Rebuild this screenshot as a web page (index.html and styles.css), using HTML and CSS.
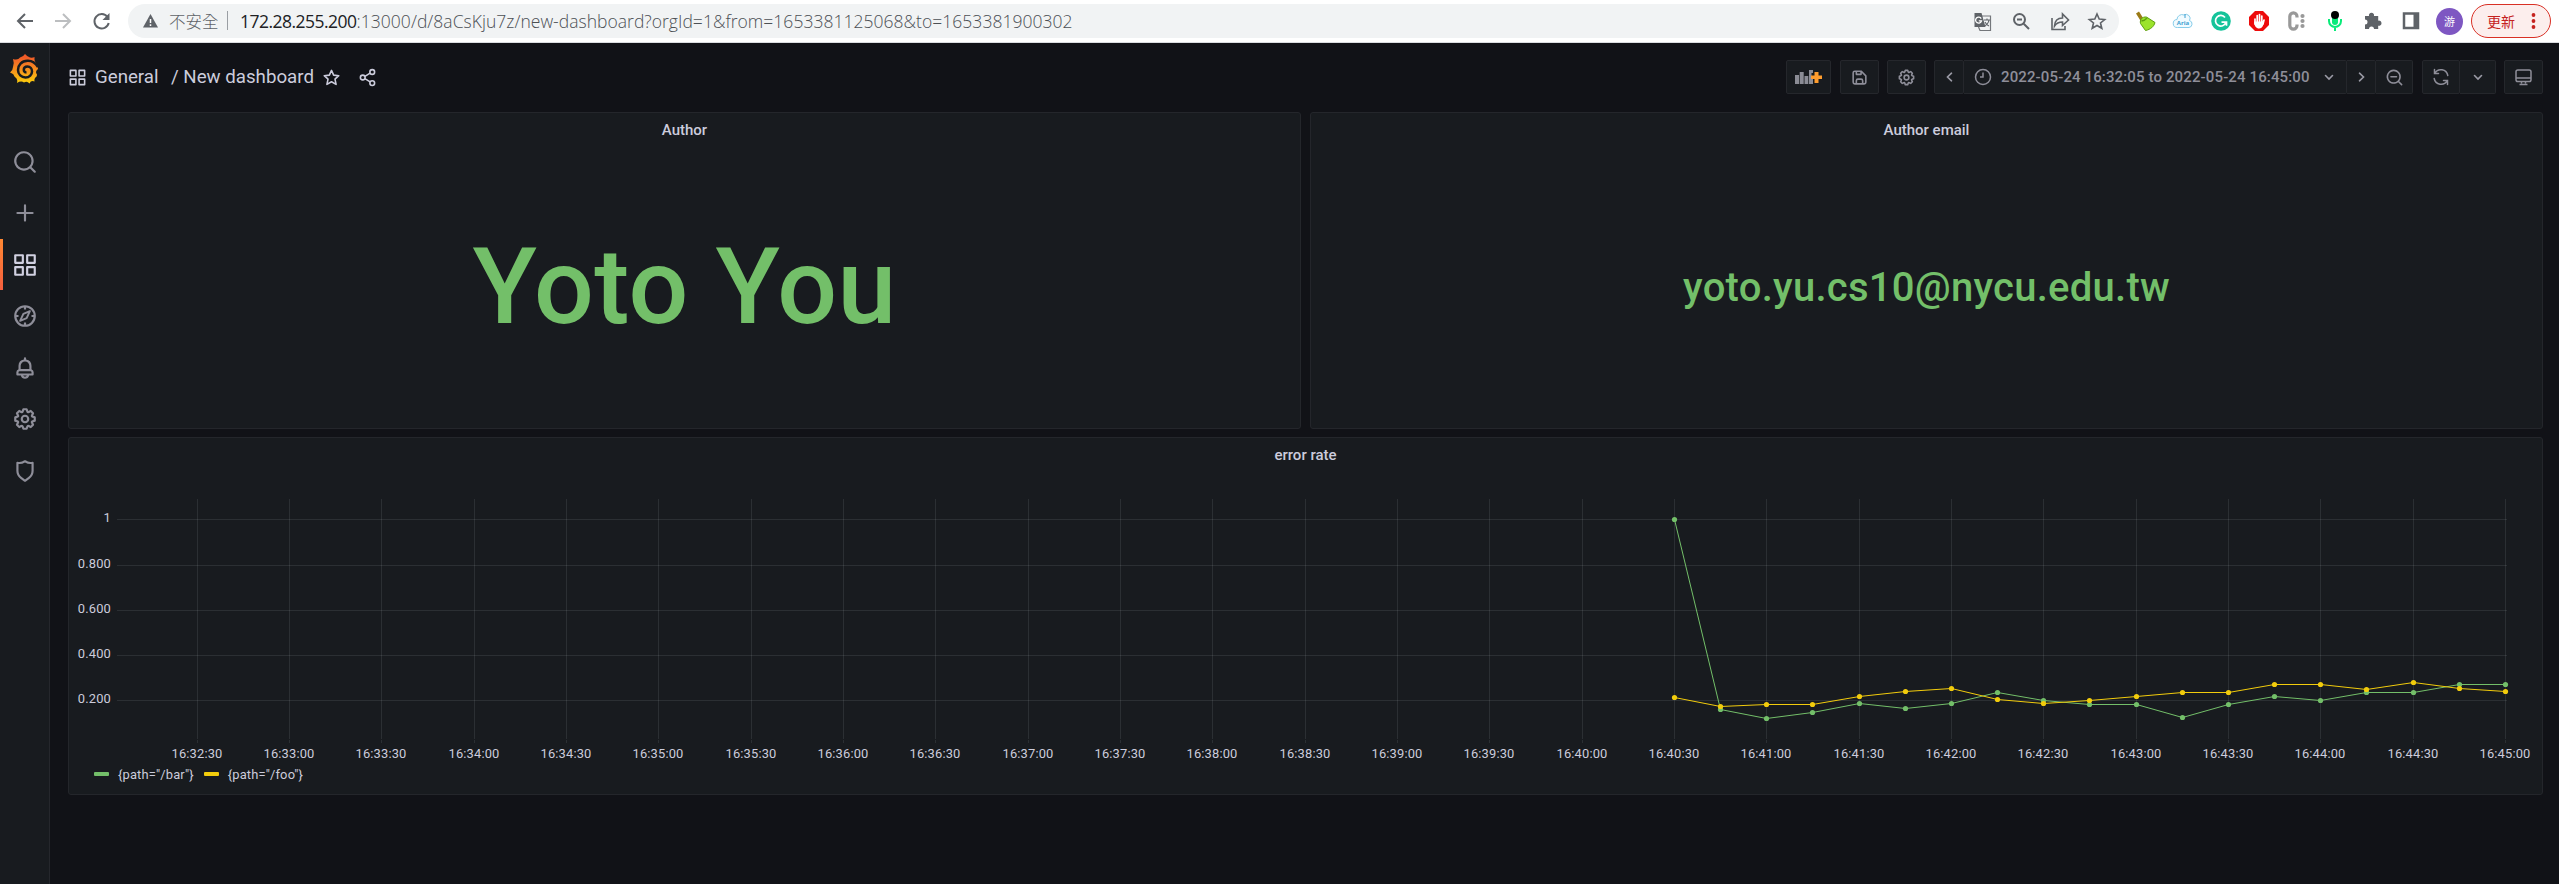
FILE: index.html
```
<!DOCTYPE html>
<html lang="zh-Hant">
<head>
<meta charset="utf-8">
<title>New dashboard - Grafana</title>
<link rel="stylesheet" href="styles.css">
</head>
<body>
<svg class="defs" width="0" height="0" aria-hidden="true">
  <symbol id="apps" viewBox="0 0 24 24"><path d="M10,13H3a1,1,0,0,0-1,1v7a1,1,0,0,0,1,1h7a1,1,0,0,0,1-1V14A1,1,0,0,0,10,13ZM9,20H4V15H9ZM21,2H14a1,1,0,0,0-1,1v7a1,1,0,0,0,1,1h7a1,1,0,0,0,1-1V3A1,1,0,0,0,21,2ZM20,9H15V4h5Zm1,4H14a1,1,0,0,0-1,1v7a1,1,0,0,0,1,1h7a1,1,0,0,0,1-1V14A1,1,0,0,0,21,13Zm-1,7H15V15h5ZM10,2H3A1,1,0,0,0,2,3v7a1,1,0,0,0,1,1h7a1,1,0,0,0,1-1V3A1,1,0,0,0,10,2ZM9,9H4V4H9Z"/></symbol>
  <symbol id="search" viewBox="0 0 24 24"><path d="M21.71,20.29,18,16.61A9,9,0,1,0,16.61,18l3.68,3.68a1,1,0,0,0,1.42,0A1,1,0,0,0,21.71,20.29ZM11,18a7,7,0,1,1,7-7A7,7,0,0,1,11,18Z"/></symbol>
  <symbol id="zoomout" viewBox="0 0 24 24"><path d="M21.71,20.29,18,16.61A9,9,0,1,0,16.61,18l3.68,3.68a1,1,0,0,0,1.42,0A1,1,0,0,0,21.71,20.29ZM11,18a7,7,0,1,1,7-7A7,7,0,0,1,11,18ZM7.500,10h7a1,1,0,0,1,0,2h-7a1,1,0,0,1,0-2Z"/></symbol>
  <symbol id="plus" viewBox="0 0 24 24"><path d="M19,11H13V5a1,1,0,0,0-2,0v6H5a1,1,0,0,0,0,2h6v6a1,1,0,0,0,2,0V13h6a1,1,0,0,0,0-2Z"/></symbol>
  <symbol id="bell" viewBox="0 0 24 24"><path d="M18,13.180V10a6,6,0,0,0-5-5.910V3a1,1,0,0,0-2,0V4.090A6,6,0,0,0,6,10v3.180A3,3,0,0,0,4,16v2a1,1,0,0,0,1,1H8.140a4,4,0,0,0,7.720,0H19a1,1,0,0,0,1-1V16A3,3,0,0,0,18,13.180ZM8,10a4,4,0,0,1,8,0v3H8Zm4,10a2,2,0,0,1-1.720-1h3.440A2,2,0,0,1,12,20Zm6-3H6V16a1,1,0,0,1,1-1H17a1,1,0,0,1,1,1Z"/></symbol>
  <symbol id="cog" viewBox="0 0 24 24"><path d="M21.32,9.55l-1.89-.63.89-1.78A1,1,0,0,0,20.13,6L18,3.87a1,1,0,0,0-1.15-.19l-1.78.89-.63-1.89A1,1,0,0,0,13.5,2h-3a1,1,0,0,0-.95.68L8.92,4.57,7.14,3.68A1,1,0,0,0,6,3.87L3.87,6a1,1,0,0,0-.19,1.15l.89,1.78-1.89.63A1,1,0,0,0,2,10.5v3a1,1,0,0,0,.68.95l1.89.63-.89,1.78A1,1,0,0,0,3.87,18L6,20.13a1,1,0,0,0,1.15.19l1.78-.89.63,1.89a1,1,0,0,0,.95.68h3a1,1,0,0,0,.95-.68l.63-1.89,1.78.89A1,1,0,0,0,18,20.13L20.13,18a1,1,0,0,0,.19-1.15l-.89-1.78,1.89-.63A1,1,0,0,0,22,13.5v-3A1,1,0,0,0,21.32,9.55ZM20,12.78l-1.2.4A2,2,0,0,0,17.64,16l.57,1.14-1.1,1.1L16,17.64a2,2,0,0,0-2.79,1.16l-.4,1.2H11.22l-.4-1.2A2,2,0,0,0,8,17.64l-1.14.57-1.1-1.1L6.36,16A2,2,0,0,0,5.2,13.18L4,12.78V11.22l1.2-.4A2,2,0,0,0,6.36,8L5.79,6.89l1.1-1.1L8,6.36A2,2,0,0,0,10.82,5.2l.4-1.2h1.56l.4,1.2A2,2,0,0,0,16,6.36l1.14-.57,1.1,1.1L17.64,8a2,2,0,0,0,1.16,2.79l1.2.4ZM12,8a4,4,0,1,0,4,4A4,4,0,0,0,12,8Zm0,6a2,2,0,1,1,2-2A2,2,0,0,1,12,14Z"/></symbol>
  <symbol id="shield" viewBox="0 0 24 24"><path d="M19.63,3.65a1,1,0,0,0-.84-.2,8,8,0,0,1-6.22-1.27,1,1,0,0,0-1.14,0A8,8,0,0,1,5.21,3.45a1,1,0,0,0-.84.2A1,1,0,0,0,4,4.43v7.45a9,9,0,0,0,3.77,7.33l3.65,2.6a1,1,0,0,0,1.16,0l3.65-2.6A9,9,0,0,0,20,11.88V4.43A1,1,0,0,0,19.63,3.65ZM18,11.88a7,7,0,0,1-2.93,5.7L12,19.77,8.93,17.58A7,7,0,0,1,6,11.88V5.58a10,10,0,0,0,6-1.39,10,10,0,0,0,6,1.39Z"/></symbol>
  <symbol id="save" viewBox="0 0 24 24"><path d="m20.710 9.290-6-6a1 1 0 0 0-.32-.21A1.090 1.090 0 0 0 14 3H6a3 3 0 0 0-3 3v12a3 3 0 0 0 3 3h12a3 3 0 0 0 3-3v-8a1 1 0 0 0-.29-.71ZM9 5h4v2H9Zm6 14H9v-3a1 1 0 0 1 1-1h4a1 1 0 0 1 1 1Zm4-1a1 1 0 0 1-1 1h-1v-3a3 3 0 0 0-3-3h-4a3 3 0 0 0-3 3v3H6a1 1 0 0 1-1-1V6a1 1 0 0 1 1-1h1v3a1 1 0 0 0 1 1h6a1 1 0 0 0 1-1V6.410l4 4Z"/></symbol>
  <linearGradient id="flame" x1="0" y1="1" x2="0" y2="0"><stop offset="0" stop-color="#fcd00b"/><stop offset=".5" stop-color="#f68b1f"/><stop offset=".9" stop-color="#f05a28"/></linearGradient>
</svg>

<header class="browser">
  <div class="nav">
    <svg width="38" height="24" viewBox="0 0 38 24" class="stroke-dark"><path d="M27 12H12M19 5l-7 7 7 7"/></svg>
    <svg width="38" height="24" viewBox="0 0 38 24" class="stroke-pale"><path d="M11 12h15M19 5l7 7-7 7"/></svg>
    <svg width="38" height="24" viewBox="0 0 38 24" class="stroke-dark"><path d="M25.500 8A7.200 7.200 0 1 0 26.700 14"/><path d="M27.500 4v7h-7z" class="solid-dark"/></svg>
  </div>
  <div class="omnibox">
    <svg class="warn" width="15" height="14" viewBox="0 0 15 14"><path d="M7.500 0 15 13.500H0z" fill="#5f6368"/><path d="M7.500 5v4M7.500 10.300v1.700" stroke="#fff" stroke-width="1.500"/></svg>
    <span class="insecure">不安全</span>
    <span class="bar"></span>
    <span class="url"><b>172.28.255.200</b>:13000/d/8aCsKju7z/new-dashboard?orgId=1&amp;from=1653381125068&amp;to=1653381900302</span>
    <div class="omni-icons">
      <svg width="38" height="24" viewBox="0 0 38 24"><path d="M17 7h9.500v14.500H16l-1.500-3.500" fill="#f1f3f4" stroke="#74777b" stroke-width="1.200"/><path d="M10.500 4h7l4 14h-11z" fill="#5f6368"/><path d="M17.200 9.600a3 3 0 1 0 .3 2.200h-2.700" fill="none" stroke="#fff" stroke-width="1.300"/><path d="M20 11h6M23 9.500V11M25 11c-.5 3-2.500 5-4.500 6M21 13c1 2 2.500 3.500 4 4" fill="none" stroke="#5f6368" stroke-width="1.100"/></svg>
      <svg width="38" height="24" viewBox="0 0 38 24" class="stroke-dark"><circle cx="17.500" cy="10.500" r="5.500"/><path d="M15 10.500h5M21.700 14.700l5.300 5.300"/></svg>
      <svg width="38" height="24" viewBox="0 0 38 24" class="stroke-dark thin"><path d="M12 9v11.500h13V17M14.500 17c.3-5.500 3-8 8-8V5l6 6-6 5.500V13c-3.500 0-6 1-8 4z"/></svg>
      <svg width="38" height="24" viewBox="0 0 38 24" class="stroke-dark thin"><path d="M19 5l2.200 5 5.500.5-4.200 3.500 1.300 5.300L19 16.500l-4.800 2.800 1.300-5.300-4.200-3.500 5.500-.5z"/></svg>
    </div>
  </div>
  <div class="extensions">
    <svg width="38" height="24" viewBox="0 0 38 24"><path d="M10 4.500l3-2 5 8-3 2z" fill="#9a7a16"/><path d="M15.500 9.500c2.500-2 5-2 6.500-.5l7 4.500c-1 4-4.500 7-9.500 8l-5-7c-.5-2 0-3.500 1-5z" fill="#9be32c" stroke="#5d9e0d"/><path d="M15.500 11.500c2 1 4-1 5.500-2.500" fill="none" stroke="#5d9e0d" stroke-width="1.500"/></svg>
    <svg width="38" height="24" viewBox="0 0 38 24"><path d="M13.500 18.500a4 4 0 0 1-.5-8 5 5 0 0 1 7-4.500 4 4 0 0 1 5.500 5.500 3.600 3.600 0 0 1-.5 7z" fill="#f1fbff" stroke="#88cdea"/><text x="19" y="16.300" class="cloud-text">Aria</text><path d="M21 5v4" stroke="#3c9ed0"/></svg>
    <svg width="38" height="24" viewBox="0 0 38 24"><circle cx="19" cy="12" r="9.800" fill="#15c39a"/><path d="M23 8.500a5.300 5.300 0 1 0 .8 5M19.500 13.200h5v3.500" fill="none" stroke="#fff" stroke-width="1.700"/></svg>
    <svg width="38" height="24" viewBox="0 0 38 24"><path d="M15 2h8l6 6v8l-6 6h-8l-6-6V8z" fill="#ed0b0b"/><path d="M15 10v5M17.200 6.500V14M19.500 5.500V14M21.800 7v8M24 11l-1 4" stroke="#fff" stroke-width="1.700" stroke-linecap="round"/><path d="M14.200 12.500h9.500c0 4-1.500 7-4.500 7s-5-2.500-5-7z" fill="#fff"/></svg>
    <svg width="38" height="24" viewBox="0 0 38 24" fill="none" stroke="#999"><path d="M19 8.500V7.500a3.600 3.600 0 0 0-7.200 0v9a3.600 3.600 0 0 0 7.200 0v-1" stroke-width="3.200"/><path d="M24.500 7v0M24.500 12v0M24.500 17v0" stroke-width="4.200" stroke-linecap="round"/></svg>
    <svg width="38" height="24" viewBox="0 0 38 24"><rect x="16" y="4" width="6" height="12" rx="3" fill="#09eb7a"/><path d="M13 10v2a6 6 0 0 0 12 0v-2M19 18v4" fill="none" stroke="#09eb7a" stroke-width="2"/><circle cx="19" cy="6" r="4" fill="#000"/></svg>
    <svg width="38" height="24" viewBox="0 0 38 24"><path d="M11 7h4a2.600 2.600 0 1 1 5 0h4.200v4.700a2.600 2.600 0 1 1 0 5V20H20a2.500 2.500 0 1 0-5 0h-4v-4.500a2.500 2.500 0 1 0 0-5z" fill="#5f6368"/></svg>
    <svg width="38" height="24" viewBox="0 0 38 24"><path d="M12 4.500h14v14.500H12z" fill="#fff" stroke="#5f6368" stroke-width="2.500"/><path d="M21.500 4h5v15h-5z" fill="#5f6368"/></svg>
  </div>
  <span class="avatar">游</span>
  <span class="update">更新<svg width="5" height="18" viewBox="0 0 5 18" fill="#c5221f"><circle cx="2.500" cy="3" r="1.900"/><circle cx="2.500" cy="9" r="1.900"/><circle cx="2.500" cy="15" r="1.900"/></svg></span>
</header>

<div class="app">
  <nav class="sidebar">
    <svg class="logo" width="29" height="30" viewBox="0 0 29 30"><path fill="url(#flame)" d="M3 5Q8 6.500 10 3.500Q13 3 15 0Q17 2.500 20 3.500Q22.500 4 24.500 3Q24 6 25.500 8.500Q28 11.500 28 15L27 16Q25 18 27 20.500Q27.500 22 25 24Q24 25.500 24.500 27.500Q21 26 19.500 29.500Q17 26.500 14 28.500Q11 26.500 7 29Q8 25.500 5.500 23.500Q4 22.500 3.500 20.500Q2.500 19.500 0 18.500Q3 16 3 13Q4.500 9 3 5Z"/><path fill="none" stroke="#181b1f" stroke-width="2.500" d="M28 13Q24 6.500 17.500 6.800C11.500 7 8 11 8 16C8 20.500 11.500 23.500 15.500 23.500C19.500 23.500 22 20.500 22 17.500C22 14.500 20 12.500 17.500 12.500C15 12.500 13.800 14 13.800 15.800C13.800 17.500 15 18.500 16.500 18.300"/></svg>
    <ul class="menu">
      <li><svg class="icon"><use href="#search"/></svg></li>
      <li><svg class="icon"><use href="#plus"/></svg></li>
      <li class="active"><svg class="icon"><use href="#apps"/></svg></li>
      <li><svg class="icon" viewBox="0 0 24 24"><circle cx="12" cy="12" r="9" fill="none" stroke="currentColor" stroke-width="2"/><path d="M12 3v3M12 18v3M3 12h3M18 12h3" stroke="currentColor" stroke-width="2"/><path d="M16.500 7.500l-6 2.500-3 6.500 6-2.500z" fill="none" stroke="currentColor" stroke-width="1.800" stroke-linejoin="round"/></svg></li>
      <li><svg class="icon"><use href="#bell"/></svg></li>
      <li><svg class="icon"><use href="#cog"/></svg></li>
      <li><svg class="icon"><use href="#shield"/></svg></li>
    </ul>
  </nav>

  <main class="main">
    <div class="toolbar">
      <div class="crumbs">
        <svg class="icon-md"><use href="#apps"/></svg>
        <span class="folder">General</span><span class="name">/ New dashboard</span>
        <svg class="icon-md star" viewBox="0 0 24 24" fill="none" stroke="currentColor" stroke-width="2" stroke-linejoin="round"><path d="M12 3l2.700 6 6.500.7-4.800 4.400 1.400 6.600L12 17.300l-5.800 3.400 1.400-6.600-4.800-4.400 6.500-.7z"/></svg>
        <svg class="icon-md share" viewBox="0 0 24 24" fill="none" stroke="currentColor" stroke-width="2"><circle cx="18" cy="5" r="3"/><circle cx="6" cy="12" r="3"/><circle cx="18" cy="19" r="3"/><path d="M8.700 10.500l6.600-4M8.700 13.500l6.600 4"/></svg>
      </div>
      <div class="tools">
        <button class="btn add"><svg width="27" height="16" viewBox="0 0 27 16"><path d="M0 6h4v9H0zM4.700 3h4v12h-4zM9.500 7h3.800v8H9.500zM14 1h4v3h-1.500v6H18v5h-4z" fill="#8b8c95"/><path d="M19.500 3h4v3.500H27v3.500h-3.500v4h-4v-4H16V6.500h3.500z" fill="#ff9d2e"/></svg></button>
        <button class="btn sq save"><svg class="icon-md"><use href="#save"/></svg></button>
        <button class="btn sq"><svg class="icon-md"><use href="#cog"/></svg></button>
        <div class="group range">
          <button class="btn prev"><svg width="7" height="10" viewBox="0 0 7 10" class="chev"><path d="M5.500 1.200 1.500 5l4 3.800"/></svg></button>
          <button class="btn time">
            <svg width="18" height="18" viewBox="0 0 18 18" fill="none" stroke="currentColor" stroke-width="1.500"><circle cx="9" cy="9" r="7.500"/><path d="M9 4.500V9H6"/></svg>
            <span>2022-05-24 16:32:05 to 2022-05-24 16:45:00</span>
            <svg width="10" height="7" viewBox="0 0 10 7" class="chev"><path d="M1.500 1.500 5 5l3.500-3.500"/></svg>
          </button>
          <button class="btn next"><svg width="7" height="10" viewBox="0 0 7 10" class="chev"><path d="M1.500 1.200 5.500 5l-4 3.800"/></svg></button>
          <button class="btn out"><svg class="icon-md"><use href="#zoomout"/></svg></button>
        </div>
        <div class="group">
          <button class="btn refresh"><svg width="18" height="18" viewBox="0 0 18 18" fill="none" stroke="currentColor" stroke-width="1.500" stroke-linecap="round"><path d="M2.500 1.500v4h4M2.800 5.300A7 7 0 0 1 15.800 7.500M15.500 16.500v-4h-4M15.200 12.700A7 7 0 0 1 2.200 10.500"/></svg></button>
          <button class="btn down"><svg width="10" height="7" viewBox="0 0 10 7" class="chev"><path d="M1.500 1.500 5 5l3.500-3.500"/></svg></button>
        </div>
        <button class="btn sq tv"><svg width="17" height="17" viewBox="0 0 17 17" fill="none" stroke="currentColor" stroke-width="1.500"><rect x="1" y="1" width="15" height="11.500" rx="1.800"/><path d="M1 9h15M6.500 12.500v2M10.500 12.500v2M4.500 15.500h8"/></svg></button>
      </div>
    </div>

    <div class="row">
      <section class="panel">
        <h2>Author</h2>
        <div class="stat big">Yoto You</div>
      </section>
      <section class="panel">
        <h2>Author email</h2>
        <div class="stat mail">yoto.yu.cs10@nycu.edu.tw</div>
      </section>
    </div>

    <section class="panel chart-panel">
      <h2>error rate</h2>
      <svg id="chart" class="chart" width="2473" height="290" viewBox="69 471 2473 290"></svg>
      <div class="legend">
        <span class="item"><i class="green"></i>{path="/bar"}</span>
        <span class="item"><i class="yellow"></i>{path="/foo"}</span>
      </div>
    </section>
  </main>
</div>
<script src="chart.js"></script>
</body>
</html>
```
FILE: styles.css
```
* { box-sizing: border-box; }
body {
  margin: 0;
  width: 2559px;
  height: 884px;
  overflow: hidden;
  background: #111217;
  color: #ccccdc;
  font-family: Roboto, "Liberation Sans", sans-serif;
}
.defs { position: absolute; }
svg { display: block; flex: none; }

/* browser bar */
.browser {
  height: 43px;
  display: flex;
  align-items: center;
  background: #fff;
  border-bottom: 1px solid #dadce0;
  font-family: "Open Sans", "Noto Sans CJK TC", sans-serif;
}
.nav { display: flex; width: 128px; padding-left: 6px; }
.stroke-dark, .stroke-pale { fill: none; stroke: #5f6368; stroke-width: 2; }
.stroke-pale { stroke: #bcbec0; }
.thin { stroke-width: 1.6; }
.solid-dark { fill: #5f6368; stroke: none; }
.omnibox {
  width: 1991px;
  height: 34px;
  margin-top: -1px;
  display: flex;
  align-items: center;
  border-radius: 17px;
  background: #f1f3f4;
  color: #5f6368;
  padding: 0 3px 0 15px;
}
.insecure {
  margin-left: 11px;
  font: 300 16.500px "Noto Sans CJK TC", sans-serif;
  line-height: 34px;
  width: 50px;
  white-space: nowrap;
}
.bar { width: 1px; height: 19px; margin: 0 12px 0 8px; background: #9a9ea3; }
.url {
  flex: 1;
  font-size: 17.500px;
  font-weight: 300;
  letter-spacing: 0.030px;
  white-space: nowrap;
  color: #4c5054;
}
.url b { font-weight: 400; letter-spacing: -0.520px; color: #202124; }
.omni-icons, .extensions { display: flex; }
.extensions { margin-left: 7px; }
.cloud-text { font: bold 6px "Open Sans", sans-serif; fill: #3c9ed0; text-anchor: middle; }
.avatar {
  width: 27px;
  height: 27px;
  margin: 0 8px 0 6px;
  border-radius: 50%;
  background: #7e57c2;
  color: #fff;
  font: 11px/27px "Noto Sans CJK TC", sans-serif;
  text-align: center;
}
.update {
  width: 80px;
  height: 34px;
  margin-top: -1px;
  padding: 0 14px 0 15px;
  display: flex;
  align-items: center;
  justify-content: space-between;
  border: 1.500px solid #d93025;
  border-radius: 17px;
  background: #fceeed;
  color: #c5221f;
  font: 14px "Noto Sans CJK TC", sans-serif;
}

/* application shell */
.app { display: flex; height: 841px; }
.sidebar {
  width: 50px;
  background: #181b1f;
  border-right: 1px solid #25272c;
}
.logo { margin: 11px 0 0 10px; }
.menu { margin: 52px 0 0; padding: 0; list-style: none; }
.menu li {
  height: 51.500px;
  display: flex;
  align-items: center;
  justify-content: center;
  color: #8e8e99;
}
.menu .active {
  color: #d0d0e0;
  background: linear-gradient(#ff8833, #f55f3e) left center / 3px 51px no-repeat;
}
.icon { width: 26px; height: 26px; fill: currentColor; }
.icon-md { width: 19px; height: 19px; fill: currentColor; }
.main { width: 2509px; padding: 17px 16px 0 18px; }
.toolbar { height: 52px; display: flex; justify-content: space-between; }
.crumbs {
  height: 34px;
  display: flex;
  align-items: center;
  font-size: 18.700px;
  white-space: nowrap;
}
.folder { margin-left: 8px; width: 66px; }
.name { margin-left: 10px; width: 142px; }
.star { margin-left: 9px; margin-top: 1px; fill: none; }
.share { margin-left: 17px; margin-top: 1px; fill: none; }
.tools { display: flex; gap: 8px; }
.btn {
  height: 34px;
  padding: 0;
  display: flex;
  align-items: center;
  justify-content: center;
  background: #181b1f;
  border: 1px solid #25272c;
  border-radius: 2px;
  color: #8e8e99;
  font: 500 15px Roboto, sans-serif;
}
.add { width: 45px; margin-right: 1px; }
.sq { width: 39px; }
.group { display: flex; }
.group .btn + .btn { border-left: 0; border-radius: 0 2px 2px 0; }
.range { margin-right: 1px; }
.prev { width: 30px; }
.time { width: 383px; justify-content: flex-start; padding-left: 10px; white-space: nowrap; }
.time span { margin: 0 14px 0 9px; width: 309px; text-align: left; letter-spacing: 0.130px; }
.next { width: 29px; }
.out { width: 37px; }
.refresh { width: 38px; }
.down { width: 36px; }
.chev { fill: none; stroke: #9a9aa5; stroke-width: 1.600; stroke-linecap: round; }

/* panels */
.row { display: flex; gap: 9px; }
.panel {
  width: 1233px;
  height: 317px;
  background: #181b1f;
  border: 1px solid #24262b;
  border-radius: 3px;
}
.panel h2 {
  margin: 0;
  height: 34px;
  font-size: 15px;
  font-weight: 500;
  line-height: 34px;
  text-align: center;
}
.stat {
  height: 281px;
  display: flex;
  align-items: center;
  justify-content: center;
  color: #73bf69;
  font-weight: 500;
}
.big { font-size: 105.500px; letter-spacing: 0.450px; padding-bottom: 2px; }
.mail { font-size: 40px; letter-spacing: 0.260px; }
.chart-panel { width: 2475px; height: 358px; margin-top: 8px; }
.chart { margin-top: -1px; }
.grid { fill: rgba(240, 250, 255, 0.090); }
.tick { font-size: 12.900px; fill: #ccccdc; letter-spacing: 0.150px; }
.mid { text-anchor: middle; }
.end { text-anchor: end; }
.legend { display: flex; padding-left: 25px; margin-top: 3px; gap: 10px; }
.item { display: flex; align-items: center; height: 20px; font-size: 12.900px; letter-spacing: 0.160px; white-space: nowrap; }
.item i { width: 15px; height: 4px; margin-right: 9px; border-radius: 1px; }
.green { background: #73bf69; }
.yellow { background: #f2cc0c; }
```
FILE: chart.js
```
(function () {
  var ns = 'http://www.w3.org/2000/svg';
  var chart = document.getElementById('chart');

  function add(tag, attrs, text) {
    var el = document.createElementNS(ns, tag);
    for (var key in attrs) el.setAttribute(key, attrs[key]);
    if (text) el.textContent = text;
    chart.appendChild(el);
  }

  // horizontal grid and value labels
  [['1', 519], ['0.800', 565], ['0.600', 610], ['0.400', 655], ['0.200', 700]].forEach(function (r) {
    add('rect', { x: 117, y: r[1], width: 2390, height: 1, 'class': 'grid' });
    add('text', { x: 111, y: r[1] + 3, 'class': 'tick end' }, r[0]);
  });

  // one vertical line every 30 seconds
  for (var i = 0; i <= 25; i++) {
    var x = Math.floor(197 + i * 92.335);
    var s = 32 * 60 + 30 + i * 30;
    var label = '16:' + Math.floor(s / 60) + ':' + (s % 60 ? '30' : '00');
    add('rect', { x: x, y: 499, width: 1, height: 240, 'class': 'grid' });
    add('rect', { x: x, y: 740, width: 1, height: 3, 'class': 'grid' });
    add('text', { x: x, y: 758, 'class': 'tick mid' }, label);
  }

  function series(color, ys) {
    var pts = ys.map(function (y, n) {
      return [Math.floor(197 + (16 + n / 2) * 92.335) + 0.5, y + 0.5];
    });
    add('polyline', { points: pts.join(' '), fill: 'none', stroke: color, 'stroke-width': 1 });
    pts.forEach(function (p) { add('circle', { cx: p[0], cy: p[1], r: 2.6, fill: color }); });
  }

  series('#73bf69', [519, 709, 718, 712, 703, 708, 703, 692, 700, 704, 704, 717, 704, 696, 700, 692, 692, 684, 684]);
  series('#f2cc0c', [697, 706, 704, 704, 696, 691, 688, 699, 703, 700, 696, 692, 692, 684, 684, 689, 682, 688, 691]);
})();
```
